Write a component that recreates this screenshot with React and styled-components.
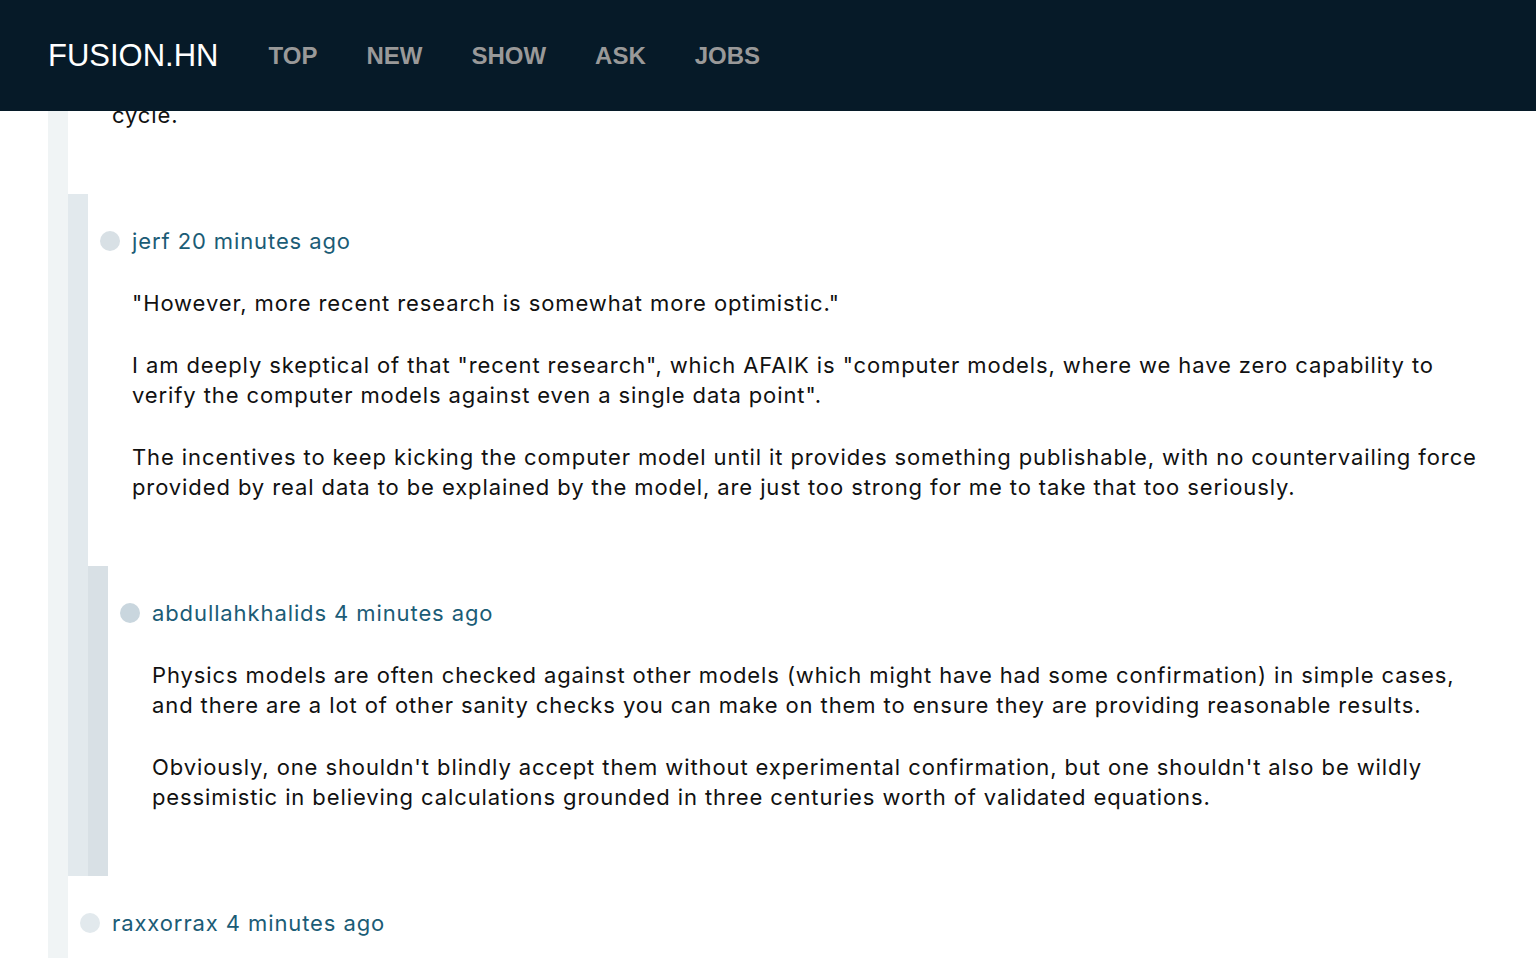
import React from 'react';
import styled, { createGlobalStyle } from 'styled-components';

const GlobalStyle = createGlobalStyle`
  * {
    box-sizing: border-box;
  }

  body {
    margin: 0;
    background: #fff;
    font-family: Inter, "Noto Sans", sans-serif;
    color: #111;
  }
`;

const barColors = ['#f0f4f5', '#e2e9ed', '#d8e0e5', '#c9d6de', '#bccbd4'];

const Header = styled.header`
  position: fixed;
  top: 0;
  left: 0;
  right: 0;
  z-index: 10;
  height: 111px;
  background: #061a28;
  display: flex;
  align-items: center;
  gap: 49px;
  padding: 0 48px;
`;

const Logo = styled.a`
  color: #fff;
  font-family: "Liberation Sans", Arial, sans-serif;
  font-size: 31px;
  margin-right: 1px;
  text-decoration: none;
`;

const NavLink = styled.a`
  color: #999;
  font-family: "Liberation Sans", Arial, sans-serif;
  font-weight: 700;
  font-size: 24px;
  text-decoration: none;
  text-transform: uppercase;
`;

const Main = styled.main`
  padding: 0 48px;
  margin-top: -24px;
`;

const Thread = styled.div`
  border-left: 20px solid ${p => barColors[p.$depth]};
`;

const CommentBox = styled.div``;

const CommentInner = styled.div`
  padding: 32px 0;
`;

const Meta = styled.div`
  display: flex;
  align-items: center;
  gap: 12px;
  padding-left: 12px;
  height: 30px;
  margin-bottom: 32px;
  font-size: 22px;
  letter-spacing: 0.9px;
  color: #1b5c76;
`;

const Dot = styled.span`
  width: 20px;
  height: 20px;
  border-radius: 50%;
  background: ${p => barColors[p.$depth + 1]};
  flex-shrink: 0;
`;

const Body = styled.div`
  padding-left: 44px;
  font-size: 22px;
  line-height: 30px;
  letter-spacing: 0.9px;

  p {
    margin: 0 0 32px;
  }
`;

const comments = [
  {
    id: 1,
    user: 'pfdietz',
    time: '31 minutes ago',
    paragraphs: [
      <>The catch is that the blanket has to breed more tritium than the plant burns, over the whole fuel<br />cycle.</>
    ],
    children: [
      {
        id: 2,
        user: 'jerf',
        time: '20 minutes ago',
        paragraphs: [
          '"However, more recent research is somewhat more optimistic."',
          'I am deeply skeptical of that "recent research", which AFAIK is "computer models, where we have zero capability to verify the computer models against even a single data point".',
          'The incentives to keep kicking the computer model until it provides something publishable, with no countervailing force provided by real data to be explained by the model, are just too strong for me to take that too seriously.'
        ],
        children: [
          {
            id: 3,
            user: 'abdullahkhalids',
            time: '4 minutes ago',
            paragraphs: [
              'Physics models are often checked against other models (which might have had some confirmation) in simple cases, and there are a lot of other sanity checks you can make on them to ensure they are providing reasonable results.',
              "Obviously, one shouldn't blindly accept them without experimental confirmation, but one shouldn't also be wildly pessimistic in believing calculations grounded in three centuries worth of validated equations."
            ],
            children: []
          }
        ]
      }
    ]
  },
  {
    id: 4,
    user: 'raxxorrax',
    time: '4 minutes ago',
    paragraphs: [
      'Models are a good start, but a working prototype would settle the question far more convincingly than any amount of simulation.'
    ],
    children: []
  }
];

function Comment({ comment, depth }) {
  return (
    <CommentBox>
      <CommentInner>
        <Meta>
          <Dot $depth={depth} />
          <span>{comment.user} {comment.time}</span>
        </Meta>
        <Body>
          {comment.paragraphs.map((text, i) => (
            <p key={i}>{text}</p>
          ))}
        </Body>
      </CommentInner>
      {comment.children.length > 0 && (
        <Thread $depth={depth + 1}>
          {comment.children.map(child => (
            <Comment key={child.id} comment={child} depth={depth + 1} />
          ))}
        </Thread>
      )}
    </CommentBox>
  );
}

export default function App() {
  return (
    <>
      <GlobalStyle />
      <Header>
        <Logo href="#">FUSION.HN</Logo>
        <NavLink href="#">Top</NavLink>
        <NavLink href="#">New</NavLink>
        <NavLink href="#">Show</NavLink>
        <NavLink href="#">Ask</NavLink>
        <NavLink href="#">Jobs</NavLink>
      </Header>
      <Main>
        <Thread $depth={0}>
          {comments.map(c => (
            <Comment key={c.id} comment={c} depth={0} />
          ))}
        </Thread>
      </Main>
    </>
  );
}
